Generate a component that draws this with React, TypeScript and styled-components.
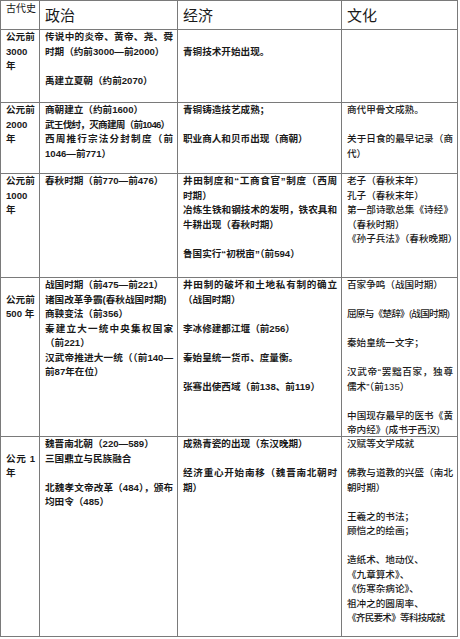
import styled, { createGlobalStyle } from "styled-components";

type Line = { t: string; j?: boolean; tight?: boolean };
type Kind = "era" | "pol" | "eco" | "cul";

const L = (t: string): Line => ({ t });
const J = (t: string): Line => ({ t, j: true });
// lines that only just fit the column in the original
const T = (t: string): Line => ({ t, tight: true });

const rows: Line[][][] = [
    [
        [L("公元前"), L("3000"), L("年")],
        [J("传说中的炎帝、黄帝、尧、舜"), L("时期（约前3000—前2000）"), L(""), L("禹建立夏朝（约前2070）")],
        [L(""), L("青铜技术开始出现。")],
        [],
    ],
    [
        [L("公元前"), L("2000"), L("年")],
        [L("商朝建立（约前1600）"), T("武王伐纣，灭商建周（前1046）"), J("西周推行宗法分封制度（前"), L("1046—前771）")],
        [L("青铜铸造技艺成熟；"), L(""), L("职业商人和贝币出现（商朝）")],
        [L("商代甲骨文成熟。"), L(""), J("关于日食的最早记录（商"), L("代）")],
    ],
    [
        [L("公元前"), L("1000"), L("年")],
        [L("春秋时期（前770—前476）")],
        [J("井田制度和“工商食官”制度（西周"), L("时期）"), J("冶炼生铁和钢技术的发明，铁农具和"), L("牛耕出现（春秋时期）"), L(""), L("鲁国实行“初税亩”（前594）")],
        [L("老子（春秋末年）"), L("孔子（春秋末年）"), J("第一部诗歌总集《诗经》"), L("（春秋时期）"), L("《孙子兵法》（春秋晚期）")],
    ],
    [
        [L(""), L("公元前"), L("500 年")],
        [L("战国时期（前475—前221）"), L("诸国改革争霸(春秋战国时期)"), L("商鞅变法（前356）"), J("秦建立大一统中央集权国家"), L("（前221）"), J("汉武帝推进大一统（（前140—"), L("前87年在位）")],
        [J("井田制的破坏和土地私有制的确立"), L("（战国时期）"), L(""), L("李冰修建都江堰（前256）"), L(""), L("秦始皇统一货币、度量衡。"), L(""), L("张骞出使西域（前138、前119）")],
        [L("百家争鸣（战国时期）"), L(""), T("屈原与《楚辞》(战国时期)"), L(""), L("秦始皇统一文字；"), L(""), J("汉武帝“罢黜百家，独尊"), L("儒术”（前135）"), L(""), J("中国现存最早的医书《黄"), L("帝内经》(成书于西汉)")],
    ],
    [
        [L(""), J("公元 1"), L("年")],
        [L("魏晋南北朝（220—589）"), L("三国鼎立与民族融合"), L(""), J("北魏孝文帝改革（484），颁布"), L("均田令（485）")],
        [L("成熟青瓷的出现（东汉晚期）"), L(""), J("经济重心开始南移（魏晋南北朝时"), L("期）")],
        [L("汉赋等文学成就"), L(""), J("佛教与道教的兴盛（南北"), L("朝时期）"), L(""), L("王羲之的书法；"), L("顾恺之的绘画；"), L(""), L("造纸术、地动仪、"), L("《九章算术》、"), L("《伤寒杂病论》、"), L("祖冲之的圆周率、"), T("《齐民要术》等科技成就")],
    ],
];

const kinds: Kind[] = ["era", "pol", "eco", "cul"];
const heads = ["政治", "经济", "文化"];

export default function App() {
    return (
        <>
            <GlobalStyle />
            <Table>
                <HeadCell $small>古代史</HeadCell>
                {heads.map(h => <HeadCell key={h}>{h}</HeadCell>)}
                {rows.map((row, r) =>
                    row.map((cell, c) => (
                        <Cell key={`${r}-${c}`} $kind={kinds[c]}>
                            {cell.map((line, i) => <Row key={i} $fill={line.j} $tight={line.tight}>{line.t}</Row>)}
                        </Cell>
                    ))
                )}
            </Table>
        </>
    );
}

const GlobalStyle = createGlobalStyle`
    body{
        margin: 0;
        background: #fff;
    }
`;

const Table = styled.div`
    display: grid;
    grid-template-columns: 38px 137px 163px 115px;
    grid-template-rows: 28px 72px 70px 103px 158px 199px;
    gap: 1px;
    padding: 1px;
    width: fit-content;
    background: #7a7a7a;
    font-family: "Liberation Sans", "Noto Sans CJK SC", sans-serif;
    color: #1a1a1a;
`;

const HeadCell = styled.div<{ $small?: boolean }>`
    background: #fff;
    display: flex;
    align-items: ${({ $small }) => $small ? "flex-start" : "center"};
    padding: 1px 0 0 5px;
    font-size: ${({ $small }) => $small ? "10px" : "15px"};
    line-height: 14px;
`;

const Cell = styled.div<{ $kind: Kind }>`
    background: #fff;
    padding: 0 4px 0 5px;
    font-size: 9.6px;
    font-weight: ${({ $kind }) => $kind === "cul" ? 500 : 700};
    overflow: hidden;
`;

const Row = styled.div<{ $fill?: boolean; $tight?: boolean }>`
    height: 14.5px;
    line-height: 14.5px;
    white-space: nowrap;
    letter-spacing: ${({ $tight }) => $tight ? "-0.75px" : "0"};
    text-align: ${({ $fill }) => $fill ? "justify" : "left"};
    text-align-last: ${({ $fill }) => $fill ? "justify" : "auto"};
`;
